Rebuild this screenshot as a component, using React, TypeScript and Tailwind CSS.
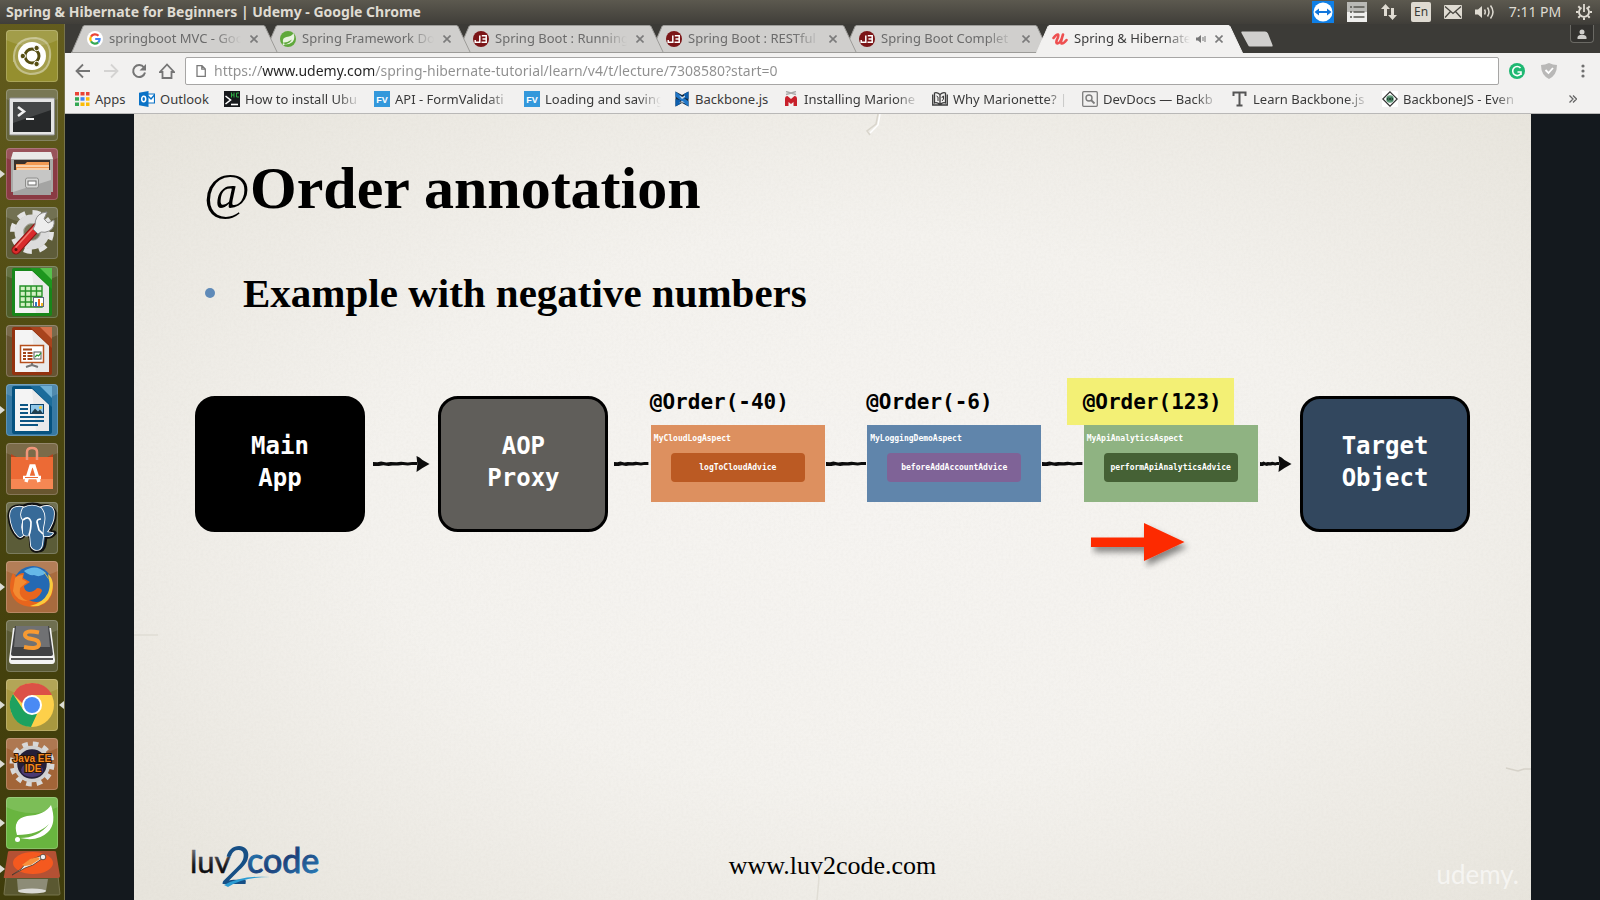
import React from 'react';
import type { ReactNode } from 'react';

/* ---------- Top panel ---------- */

function TopPanel() {
  return (
    <header className="flex h-6 shrink-0 items-center justify-between bg-linear-to-b from-[#5c594f] to-[#403e39] pl-1.5 pr-[7px] text-[#dfdbd2]">
      <h1 className="text-[14px] leading-6 font-bold whitespace-nowrap">
        Spring &amp; Hibernate for Beginners | Udemy - Google Chrome
      </h1>
      <div className="flex h-6 items-center gap-[13px]">
        <button aria-label="TeamViewer">
          <svg className="block h-[22px] w-[22px]" viewBox="0 0 22 22">
            <rect width="22" height="22" fill="#0f7fe6" />
            <circle cx="11" cy="11" r="9.5" fill="#fff" />
            <path d="M2.500 11l4.500-3.500v2.500h8V7.500l4.500 3.500-4.500 3.500V12H7v2.500z" fill="#1276dc" />
          </svg>
        </button>
        <button aria-label="Task list">
          <svg className="block h-5 w-5" viewBox="0 0 20 20">
            <rect width="20" height="10" fill="#b9b9b5" />
            <rect y="10" width="20" height="10" fill="#efefed" />
            <path d="M3 5h2M3 10h2M3 15h2M6.500 5h11M6.500 10h11M6.500 15h11" stroke="#55554f" strokeWidth="1.600" />
          </svg>
        </button>
        <button aria-label="Network">
          <svg className="block h-[18px] w-[18px]" viewBox="0 0 18 18" fill="#dfdbd2">
            <path d="M5.500 1L10 6H7v7H4V6H1z" />
            <path d="M12.500 17L8 12h3V5h3v7h3z" />
          </svg>
        </button>
        <button className="h-5 w-5 rounded-xs bg-[#dfdbd2] text-[12px] leading-5 text-[#3c3b37]">En</button>
        <button aria-label="Messages">
          <svg className="block h-3.5 w-[18px]" viewBox="0 0 18 14">
            <rect width="18" height="14" rx="1" fill="#dfdbd2" />
            <path d="M1 1.500l8 7 8-7M1 12.500l5.500-6M17 12.500l-5.500-6" fill="none" stroke="#45433d" strokeWidth="1.300" />
          </svg>
        </button>
        <button aria-label="Sound">
          <svg className="block h-4 w-5" viewBox="0 0 20 16" fill="none" stroke="#dfdbd2" strokeWidth="1.500">
            <path d="M0 5.500h3L7 2v12L3 10.500H0z" fill="#dfdbd2" stroke="none" />
            <path d="M9.500 5.500q1.500 2.500 0 5M12.500 3.500q3 4.500 0 9M15.500 1.500q5 6.500 0 13" />
          </svg>
        </button>
        <time className="w-[54px] text-center text-[14px] leading-6 whitespace-nowrap">7:11 PM</time>
        <button aria-label="System">
          <svg className="block h-[18px] w-[18px]" viewBox="0 0 18 18" fill="none" stroke="#dfdbd2">
            <path d="M6.500 4.600a5 5 0 1 0 5 0" strokeWidth="1.800" />
            <path d="M9 1v8" strokeWidth="1.800" />
            <path d="M1 9h2.500M14.500 9H17M3.300 3.300l1.800 1.800M14.700 3.300l-1.800 1.800M3.300 14.700l1.800-1.800M14.700 14.700l-1.800-1.800M9 14.500V17" strokeWidth="2" />
          </svg>
        </button>
      </div>
    </header>
  );
}

/* ---------- Launcher ---------- */

const DocShape = ({ dark, mid, light }: { dark: string; mid: string; light: string }) => (
  <>
    <path d="M6 4q0-2 2-2h18l20 20v26q0 2-2 2H8q-2 0-2-2z" fill={dark} />
    <path d="M9 5h17l17 16v26H9z" fill="#f4f4f4" />
    <path d="M26 5l17 16v26H30z" fill="#e2e2e2" opacity=".6" />
    <path d="M24 2h20q2 0 2 2v19z" fill={mid} />
    <path d="M34 2h12v12z" fill={light} />
  </>
);

const launcherItems: { name: string; tile: string; running?: boolean; active?: boolean; art: ReactNode }[] = [
  {
    name: 'Search your computer',
    tile: 'bg-[#958f2f]',
    art: (
      <>
        <circle cx="26" cy="26" r="19" fill="#fff" opacity=".14" />
        <path d="M8 32Q6 8 30 8q16 2 14 20M44 20q2 24-20 24-14-2-16-16" fill="none" stroke="#fff" strokeWidth="2" opacity=".35" />
        <circle cx="26" cy="26" r="14" fill="#fff" />
        <circle cx="26" cy="26" r="7" fill="none" stroke="#554d12" strokeWidth="3" />
        <g fill="#554d12" stroke="#fff" strokeWidth="1">
          <circle cx="16.800" cy="26" r="2.700" />
          <circle cx="30.600" cy="18" r="2.700" />
          <circle cx="30.600" cy="34" r="2.700" />
        </g>
      </>
    ),
  },
  {
    name: 'Terminal',
    tile: 'bg-[#66653b]',
    art: (
      <>
        <rect x="3.500" y="9" width="45" height="37" rx="1" fill="#e4e4e4" stroke="#8e8e8e" />
        <rect x="7" y="13" width="38" height="30" fill="#262829" />
        <path d="M7 13h38v8L7 34z" fill="#fff" opacity=".14" />
        <path d="M12 18l6 4.500-6 4.500" fill="none" stroke="#f1f1f1" strokeWidth="2.500" />
        <path d="M20 30h8" stroke="#f1f1f1" strokeWidth="2" />
      </>
    ),
  },
  {
    name: 'Files',
    tile: 'bg-[#8a3a43]',
    running: true,
    art: (
      <>
        <path d="M7 5h38l2 6v33H5V11z" fill="#a9a9a7" />
        <path d="M7 4h38l2 7H5z" fill="#e9e9e8" />
        <rect x="8" y="12" width="36" height="12" fill="#3a302b" />
        <path d="M10 16h9l2-2h22v10H10z" fill="#f39a52" />
        <path d="M10 18h33M11 21h32" stroke="#fde2c5" strokeWidth="1.500" />
        <path d="M7 22h38v25H7z" fill="#a4a4a3" />
        <path d="M7 22h38v10L7 44z" fill="#c6c6c5" />
        <rect x="19.500" y="30" width="13" height="10" rx="2" fill="#d7d7d6" stroke="#8e8e8c" />
        <rect x="22" y="33" width="8" height="4" fill="#fff" stroke="#6e6e6c" />
      </>
    ),
  },
  {
    name: 'System Settings',
    tile: 'bg-[#5e5c39]',
    art: (
      <>
        <circle cx="26" cy="25" r="19.500" fill="none" stroke="#e3e3e3" strokeWidth="5" strokeDasharray="8 7.300" />
        <circle cx="26" cy="25" r="13" fill="none" stroke="#dcdcdc" strokeWidth="9" />
        <circle cx="26" cy="25" r="8.500" fill="#77765a" stroke="#b5b5b0" />
        <path d="M10 43L31 20" stroke="#8e1414" strokeWidth="9" strokeLinecap="round" />
        <path d="M10 43L31 20" stroke="#d92b2b" strokeWidth="7" strokeLinecap="round" />
        <path d="M10 40L29 19" stroke="#f07b70" strokeWidth="1.500" strokeLinecap="round" />
        <path d="M29 18q0-9 7-12l5-1-3 7 4 4 6-3q1 8-5 11-4 2-8 1l-3 2-5-5z" fill="#ededed" stroke="#8c8c8c" />
        <circle cx="10" cy="42.500" r="1.500" fill="#5f1010" />
      </>
    ),
  },
  {
    name: 'LibreOffice Calc',
    tile: 'bg-[#4f5d2a]',
    art: (
      <>
        <DocShape dark="#18861a" mid="#1d961e" light="#57c24d" />
        <rect x="14" y="20" width="22" height="21" fill="#d3f1c4" />
        <path d="M14 20h22v21H14zM19.500 20v21M25 20v21M30.500 20v21M14 25h22M14 30.500h22M14 36h22" fill="none" stroke="#27912a" strokeWidth="1.400" />
        <rect x="27.500" y="31.500" width="10" height="9" fill="#fff" stroke="#5a6a7a" />
        <path d="M29 40v-4h2v4z" fill="#2d78c4" />
        <path d="M32 40v-7h2v7z" fill="#e8641b" />
        <path d="M35 40v-3h2v3z" fill="#f0b722" />
      </>
    ),
  },
  {
    name: 'LibreOffice Impress',
    tile: 'bg-[#665432]',
    art: (
      <>
        <DocShape dark="#93320f" mid="#a8431d" light="#d4714a" />
        <rect x="14.500" y="20.500" width="23" height="17" fill="#fff" stroke="#b6501d" strokeWidth="1.500" />
        <path d="M17 24.500h9M17 28h3M21.500 28h5M17 31h3M21.500 31h5M17 34h3M21.500 34h5" stroke="#a24519" strokeWidth="1.800" />
        <rect x="28" y="27" width="7" height="7" fill="#fff" stroke="#555" />
        <path d="M29 32l2-2 1.500 1L35 28" fill="none" stroke="#2c9e36" strokeWidth="1.200" />
        <path d="M26 38v2l-6 2M26 40l6 2" stroke="#777" strokeWidth="2" fill="none" />
      </>
    ),
  },
  {
    name: 'LibreOffice Writer',
    tile: 'bg-[#3779a3]',
    running: true,
    art: (
      <>
        <DocShape dark="#06527f" mid="#1b6c9b" light="#6fb0d4" />
        <path d="M14 21h8M14 25h8M14 29h8M14 33h24M14 37h24M14 41h18" stroke="#0d5684" strokeWidth="2" />
        <rect x="24.500" y="20.500" width="13" height="9" fill="#8fc7e9" stroke="#0d4670" />
        <path d="M25 29.500l4-5 3 3 2-2 3 4z" fill="#213f4e" />
        <circle cx="34.500" cy="23.500" r="1.500" fill="#f3c738" />
      </>
    ),
  },
  {
    name: 'Ubuntu Software',
    tile: 'bg-[#68562f]',
    art: (
      <>
        <path d="M5 11l5 3h32l5-3v8H5z" fill="#b8421d" />
        <path d="M5 14h42v32H5z" fill="#ec6a35" />
        <path d="M5 36h42v10H5z" fill="#f58753" />
        <path d="M21 17V9q0-4 5-4t5 4v8" fill="none" stroke="#f0967a" strokeWidth="2.500" />
        <path d="M20 39l5-16h3l5 16M17 34.500h18" fill="none" stroke="#fff" strokeWidth="3.500" />
        <path d="M19 34.500h13" stroke="#ec6a35" strokeWidth="1" />
      </>
    ),
  },
  {
    name: 'pgAdmin',
    tile: 'bg-[#5b5c38]',
    art: (
      <g fill="#376a98" stroke="#111" strokeWidth="5" strokeLinejoin="round" style={{ paintOrder: 'stroke' }}>
        <path d="M17 5Q4 3 4 14q1 13 8 20 3 3 6-2l5 0 2 3 1 10q1 4 6 3 5 0 6-6l1-8q6 1 9-3l-6-1q7-10 6-20Q44 3 35 5q-8-4-18 0z" />
        <g stroke="#fff" strokeWidth="1.700">
          <path d="M17 5Q4 3 4 14q1 13 8 20 3 3 6-2-5-5-1-14 2-9 0-13z" />
          <path d="M35 5q13-4 13 7 0 9-7 18l6 1q-2 4-9 3-4-6-1-14 2-9-2-15z" />
          <path d="M17 6q9-5 18 0 5 6 3 15-2 8-1 14l-1 8q-1 5-5 5t-6-4l-1-11q-6 2-7-2V18q-4-5 0-12z" />
          <path d="M17 18q6-5 8 2 0 8-2 13M35 17q-4 0-4 3l2 8 4 4" fill="none" />
        </g>
      </g>
    ),
  },
  {
    name: 'Firefox',
    tile: 'bg-[#a86b3e]',
    running: true,
    art: (
      <>
        <circle cx="27" cy="25" r="20" fill="#2469b3" />
        <path d="M18 10q12-8 22 2-6 5-12 2-5 1-10-4z" fill="#65b8e8" />
        <path d="M7 12l3 4q3-4 8-4l-1 5 7 4-6 4q0 5 5 6 5 0 8-4 5 0 5 3-4 9-13 9 9 5 17-2 8-8 3-23 5 5 4 15-3 16-20 17Q6 45 4 27q0-9 3-15z" fill="#e8651d" />
        <path d="M37 10q10 9 5 22-5 10-18 13 15 2 21-11 5-14-3-21l1 6z" fill="#f8cb3d" />
        <path d="M9 17q3-3 8-3l-1 4 5 3-7 6q-2 10 8 13-12 0-15-10z" fill="#f38b31" />
      </>
    ),
  },
  {
    name: 'Sublime Text',
    tile: 'bg-[#5a5a36]',
    art: (
      <>
        <path d="M7 8h38l4 32q0 4-3 4H6q-3 0-3-4z" fill="#f3f3f3" />
        <path d="M5 39h42" stroke="#222" strokeWidth="1.500" />
        <path d="M9 6h34l4 28q0 2-2 2H7q-2 0-2-2z" fill="#414244" />
        <path d="M10 6h32l2 21H8z" fill="#707173" />
        <path d="M33 12.500q-14-3-14 2.500 0 3 7 4t7 5q0 6-15 3" fill="none" stroke="#f79a32" strokeWidth="4" />
      </>
    ),
  },
  {
    name: 'Google Chrome',
    tile: 'bg-[#a8983f]',
    running: true,
    active: true,
    art: (
      <>
        <circle cx="26" cy="26" r="22" fill="#fdd04a" />
        <path d="M26 4q14 0 20 12H26L16 24 7 15Q13 4 26 4z" fill="#dc5146" />
        <path d="M7 15l11 17 13 3-6 13Q8 47 4 29 3 21 7 15z" fill="#1da15f" />
        <circle cx="26" cy="26" r="10" fill="#fff" />
        <circle cx="26" cy="26" r="8" fill="#4a8af4" />
      </>
    ),
  },
  {
    name: 'Eclipse',
    tile: 'bg-[#a26538]',
    running: true,
    art: (
      <>
        <circle cx="26" cy="26" r="20" fill="none" stroke="#d8d8d8" strokeWidth="5" strokeDasharray="5.500 5" />
        <circle cx="26" cy="26" r="16.500" fill="#241f38" stroke="#d0d0d0" strokeWidth="3.500" />
        <ellipse cx="26" cy="32" rx="11" ry="7" fill="#544182" opacity=".8" />
        <g className="font-['Liberation_Sans'] text-[10px] font-bold" fill="#f58a20" stroke="#2b1505" strokeWidth="2" textAnchor="middle" style={{ paintOrder: 'stroke' }}>
          <text x="26" y="24">Java EE</text>
          <text x="27" y="34">IDE</text>
        </g>
      </>
    ),
  },
  {
    name: 'Spring Tool Suite',
    tile: 'bg-[#69b53f]',
    running: true,
    art: (
      <>
        <path d="M45 8q6 18-3 27-10 10-28 6 18 0 29-14-11 11-32 11-5-16 10-19 18-1 24-11z" fill="#fff" />
        <circle cx="11.500" cy="42.500" r="2.500" fill="#fff" />
      </>
    ),
  },
];

const RunningMark = () => (
  <svg className="absolute top-1/2 -left-1.5 -mt-1 h-2 w-[5px]" viewBox="0 0 5 8">
    <path d="M0 0l5 4-5 4z" fill="#dcdcd4" />
  </svg>
);

function Launcher() {
  return (
    <nav aria-label="Launcher" className="flex w-[65px] shrink-0 flex-col overflow-hidden border-r border-[#77734c] bg-linear-to-b from-[#635c1d] via-[#49450f] to-[#3f3c0b] px-1.5 pt-1.5">
      <div className="flex flex-col gap-[7px]">
        {launcherItems.map((item) => (
          <div key={item.name} className="relative h-[52px] w-[52px]">
            {item.running && <RunningMark />}
            <button aria-label={item.name} className={`block h-full w-full overflow-hidden rounded-sm shadow-[inset_0_0_0_1px_rgba(255,255,255,0.2)] ${item.tile}`}>
              <svg className="block h-full w-full" viewBox="0 0 52 52">
                <path d="M0 0h52v10Q26 22 0 10z" fill="#fff" opacity=".13" />
                {item.art}
              </svg>
            </button>
            {item.active && (
              <svg className="absolute top-1/2 -right-1.5 -mt-1 h-2 w-[5px]" viewBox="0 0 5 8">
                <path d="M5 0L0 4l5 4z" fill="#dcdcd4" />
              </svg>
            )}
          </div>
        ))}
      </div>
      <div className="relative -mx-1 mt-px">
        <svg className="absolute top-[15px] -left-0.5 h-2 w-[5px]" viewBox="0 0 5 8">
          <path d="M0 0l5 4-5 4z" fill="#dcdcd4" />
        </svg>
        <button aria-label="Postman and Trash" className="block">
          <svg className="block h-[46px] w-[60px]" viewBox="0 0 60 46">
            <path d="M4 26l52 0 2 18q0 1-2 1H3q-1 0-1-1z" fill="#5a5831" stroke="#77744d" />
            <path d="M15 29h31l-2 12H16z" fill="#8d8c77" />
            <ellipse cx="30" cy="41" rx="14" ry="2.500" fill="#dadad6" />
            <path d="M8 1h44q2 0 2 1l4 24q0 2-2 2H3q-2 0-1-2L6 2q0-1 2-1z" fill="#b45134" />
            <ellipse cx="31" cy="13" rx="20" ry="11" fill="#f4591f" />
            <path d="M10 25l9-6 7-8 12-5 3 2-10 7-8 3z" fill="#efefef" stroke="#4a3528" strokeWidth=".8" />
            <path d="M20 15l8-6 8-2 2 2-9 6-6 1z" fill="#f8913c" />
            <circle cx="41" cy="7" r="2.800" fill="#efefef" stroke="#4a3528" strokeWidth=".8" />
          </svg>
        </button>
      </div>
    </nav>
  );
}

/* ---------- Browser tabs ---------- */

const GoogleIcon = () => (
  <svg className="block h-4 w-4" viewBox="0 0 16 16">
    <circle cx="8" cy="8" r="8" fill="#fff" />
    <g fill="none" strokeWidth="2.200">
      <path d="M11.500 4.800A4.700 4.700 0 0 0 4 5.600" stroke="#ea4335" />
      <path d="M4 5.600a4.700 4.700 0 0 0 0 4.800" stroke="#fbbc05" />
      <path d="M4 10.400a4.700 4.700 0 0 0 7.200 1" stroke="#34a853" />
      <path d="M11.200 11.400Q12.700 10 12.600 8H8.200" stroke="#4285f4" />
    </g>
  </svg>
);

const SpringIcon = () => (
  <svg className="block h-4 w-4" viewBox="0 0 16 16">
    <circle cx="8" cy="8" r="8" fill="#5fa83b" />
    <path d="M13.500 2q2 6-1 9-3.500 3-9 2.500 6-.5 8.500-5-4 3-9 3.300-1-5 3.500-5.800Q12 5.500 13.500 2z" fill="#e8f3e0" />
    <circle cx="3.600" cy="13.200" r="1" fill="#e8f3e0" />
  </svg>
);

const JbIcon = () => (
  <svg className="block h-4 w-4" viewBox="0 0 16 16">
    <circle cx="8" cy="8" r="8" fill="#7b1517" />
    <path d="M6.800 4.500V11.200H2.200V9M8.800 4.800h4.400v6.400H8.500M9.500 8H13" fill="none" stroke="#fff" strokeWidth="1.500" />
  </svg>
);

const UdemyIcon = () => (
  <svg className="block h-4 w-4" viewBox="0 0 16 16">
    <path d="M1.500 7Q4.500 3 6 3.500q1 1-1 5-1.500 4 .5 4 3 0 5.500-9-2.500 8-1.500 9 2 .5 5-3.500" fill="none" stroke="#ee4f50" strokeWidth="2.600" strokeLinecap="round" strokeLinejoin="round" />
  </svg>
);

const tabs: { title: string; icon: ReactNode; layer: string; active?: boolean }[] = [
  { title: 'springboot MVC - Goo', icon: <GoogleIcon />, layer: 'z-5' },
  { title: 'Spring Framework Do', icon: <SpringIcon />, layer: 'z-4' },
  { title: 'Spring Boot : Running', icon: <JbIcon />, layer: 'z-3' },
  { title: 'Spring Boot : RESTful', icon: <JbIcon />, layer: 'z-2' },
  { title: 'Spring Boot Complet', icon: <JbIcon />, layer: 'z-1' },
  { title: 'Spring & Hibernate', icon: <UdemyIcon />, layer: 'z-10', active: true },
];

function TabStrip() {
  return (
    <div role="tablist" className="flex h-[29px] shrink-0 items-start justify-between bg-[#3c3b37] pr-1.5 pl-1.5">
      <div className="flex h-full items-end">
        {tabs.map((tab) => (
          <div key={tab.title} className={`relative isolate flex h-7 w-[193px] shrink-0 items-center pl-4 ${tab.layer}`}>
            <svg className="absolute top-0 left-0 -z-1 h-7 w-[207px]" viewBox="0 0 207 28">
              <path d="M.5 28L12 1.500Q12.500.5 14 .5h178q1.500 0 2 1L206.500 28" fill={tab.active ? '#f2f1f0' : '#d0cfcd'} stroke={tab.active ? '#f2f1f0' : '#9c9b98'} />
              {!tab.active && <path d="M0 27.500h207" stroke="#9c9b98" />}
            </svg>
            {tab.icon}
            <button
              role="tab"
              aria-selected={!!tab.active}
              className={`ml-1.5 pb-0.5 text-left text-[13px] leading-5 whitespace-nowrap [mask-image:linear-gradient(to_right,#000_80%,transparent)] ${tab.active ? 'w-[116px] text-[#3c3c3c]' : 'w-[132px] text-[#6b6b6b]'}`}
            >
              {tab.title}
            </button>
            {tab.active && (
              <svg className="ml-1.5 block h-2.5 w-2.5" viewBox="0 0 10 10">
                <path d="M0 3.500h2L5 1v8L2 6.500H0z" fill="#777" />
                <path d="M7 3v4M9 2v6" stroke="#777" />
              </svg>
            )}
            <button aria-label="Close tab" className="ml-[9px]">
              <svg className="block h-2 w-2" viewBox="0 0 8 8">
                <path d="M.5.5l7 7M7.500.5l-7 7" stroke="#7b7b7b" strokeWidth="1.600" />
              </svg>
            </button>
          </div>
        ))}
        <button aria-label="New tab" className="ml-3 self-center">
          <svg className="block h-4 w-8" viewBox="0 0 32 16">
            <path d="M1 .5h23q2 0 3 2L31.500 14q.5 1.500-1 1.500H9q-1.500 0-2-1.500L.5 2Q0 .5 1 .5z" fill="#d0cfcd" />
          </svg>
        </button>
      </div>
      <button aria-label="Profile" className="mt-px flex h-[18px] w-6 items-center justify-center rounded-b-sm border border-t-0 border-[#6a6964] bg-[#33322f]">
        <svg className="block h-3 w-2.5" viewBox="0 0 10 12">
          <circle cx="5" cy="4" r="2.500" fill="#cfcecb" />
          <path d="M.5 11V9Q1 7.500 3 7h4q2 .5 2.500 2v2z" fill="#cfcecb" />
        </svg>
      </button>
    </div>
  );
}

/* ---------- Toolbar ---------- */

function Toolbar() {
  return (
    <div className="flex h-9 shrink-0 items-center pr-[15px] pb-px pl-[10px]">
      <div className="flex gap-3">
        <button aria-label="Back">
          <svg className="block h-4 w-4" viewBox="0 0 16 16" fill="none" stroke="#757575" strokeWidth="1.800">
            <path d="M15 8H2M8 1.500L1.500 8 8 14.500" />
          </svg>
        </button>
        <button aria-label="Forward">
          <svg className="block h-4 w-4" viewBox="0 0 16 16" fill="none" stroke="#d4d3d2" strokeWidth="1.800">
            <path d="M1 8h13M8 1.500L14.500 8 8 14.500" />
          </svg>
        </button>
        <button aria-label="Reload">
          <svg className="block h-4 w-4" viewBox="0 0 16 16">
            <path d="M13 4.500A6 6 0 1 0 14 9.500" fill="none" stroke="#757575" strokeWidth="2" />
            <path d="M15 1v6.500H8.500z" fill="#757575" />
          </svg>
        </button>
        <button aria-label="Home">
          <svg className="block h-4 w-4" viewBox="0 0 16 16">
            <path d="M8 1.500L1 9h2.500v6h9V9H15z" fill="none" stroke="#757575" strokeWidth="1.800" />
          </svg>
        </button>
      </div>
      <label className="ml-[10px] flex h-7 min-w-0 flex-1 items-center rounded-xs border border-[#a7a6a5] bg-white pl-2.5">
        <svg className="block h-3 w-2.5 shrink-0" viewBox="0 0 10 12">
          <path d="M1 .7h5L9.300 4v7.300H1zM5.800.7v3.500h3.500" fill="none" stroke="#7a7a7a" strokeWidth="1.300" />
        </svg>
        <input
          aria-label="Address"
          className="ml-2 h-6 min-w-0 flex-1 bg-[linear-gradient(to_right,#8f8f8f_47px,#222_47px,#222_160px,#8f8f8f_160px)] bg-clip-text text-[14px] text-transparent outline-none"
          defaultValue="https://www.udemy.com/spring-hibernate-tutorial/learn/v4/t/lecture/7308580?start=0"
        />
      </label>
      <div className="ml-2.5 flex items-center">
        <button aria-label="Grammarly">
          <svg className="block h-4 w-4" viewBox="0 0 16 16">
            <circle cx="8" cy="8" r="8" fill="#1fb872" />
            <path d="M11.500 5A4.500 4.500 0 1 0 12 10.500M8.500 9H12v3" fill="none" stroke="#fff" strokeWidth="1.600" />
          </svg>
        </button>
        <button aria-label="AdGuard" className="ml-4">
          <svg className="block h-4 w-4" viewBox="0 0 16 16">
            <path d="M8 0q4 2 8 2 0 10-8 14Q0 12 0 2q4 0 8-2z" fill="#b9b8b7" />
            <path d="M4.500 7l3 3L12 5" fill="none" stroke="#fff" strokeWidth="1.800" />
          </svg>
        </button>
        <button aria-label="Menu" className="ml-6">
          <svg className="block h-3.5 w-1" viewBox="0 0 4 14" fill="#6f6f6f">
            <circle cx="2" cy="2" r="1.600" />
            <circle cx="2" cy="7" r="1.600" />
            <circle cx="2" cy="12" r="1.600" />
          </svg>
        </button>
      </div>
    </div>
  );
}

/* ---------- Bookmarks ---------- */

const FvIcon = () => (
  <svg className="block h-4 w-4" viewBox="0 0 16 16">
    <rect width="16" height="16" fill="#3498db" />
    <text x="8" y="11.500" textAnchor="middle" fill="#fff" className="font-['Liberation_Sans'] text-[9px] font-bold">FV</text>
  </svg>
);

const bookmarks: { label: string; width: string; icon: ReactNode }[] = [
  {
    label: 'Apps',
    width: 'w-[31px]',
    icon: (
      <svg className="block h-4 w-4" viewBox="0 0 16 16">
        <path d="M1 1h4v3.500H1zM6.500 1h4v3.500h-4zM12 1h3.500v3.500H12z" fill="#ea4335" />
        <path d="M1 6.200h4v3.500H1z" fill="#34a853" />
        <path d="M6.500 6.200h4v3.500h-4z" fill="#4285f4" />
        <path d="M12 6.200h3.500v3.500H12z" fill="#fbbc05" />
        <path d="M1 11.500h4V15H1z" fill="#34a853" />
        <path d="M6.500 11.500h4V15h-4zM12 11.500h3.500V15H12z" fill="#fbbc05" />
      </svg>
    ),
  },
  {
    label: 'Outlook',
    width: 'w-[51px]',
    icon: (
      <svg className="block h-4 w-4" viewBox="0 0 16 16">
        <path d="M8 3h7.500v9H8z" fill="#fff" stroke="#0a72c6" strokeWidth="1.200" />
        <path d="M9 5l3 3 3.500-4" fill="none" stroke="#0a72c6" strokeWidth="1.500" />
        <path d="M0 1.800L9.500 0v16L0 14.200z" fill="#0a72c6" />
        <ellipse cx="4.700" cy="8" rx="2" ry="2.700" fill="none" stroke="#fff" strokeWidth="1.500" />
      </svg>
    ),
  },
  {
    label: 'How to install Ubu',
    width: 'w-[116px]',
    icon: (
      <svg className="block h-4 w-4" viewBox="0 0 16 16">
        <rect width="16" height="16" fill="#17191c" />
        <path d="M1.500 5l5 4-5 4" fill="none" stroke="#fff" strokeWidth="1.600" />
        <path d="M7 13.500h7" stroke="#fff" strokeWidth="1.600" />
        <path d="M7.500 1.500v5M10 1.500v5M7.500 4H10M15 2h-2.500v4H15" fill="none" stroke="#2fae44" />
      </svg>
    ),
  },
  { label: 'API - FormValidati', width: 'w-[116px]', icon: <FvIcon /> },
  { label: 'Loading and saving', width: 'w-[116px]', icon: <FvIcon /> },
  {
    label: 'Backbone.js',
    width: 'w-[75px]',
    icon: (
      <svg className="block h-4 w-4" viewBox="0 0 16 16">
        <path d="M1.500 .5L8 4l6.500-3.500v15L8 12l-6.500 3.500z" fill="#11293f" />
        <path d="M1.500 .5v5l13 10v-5z" fill="#1f76c8" />
        <path d="M14.500 .5L10 3v4l4.500 1zM1.500 15.500L6 13V9L1.500 8z" fill="#0d5fae" />
        <path d="M5 4.500l3 1.500 3-1.500v1.500L8 8zM5 11.500L8 10l3 1.500" fill="#f2f1f0" opacity=".85" />
      </svg>
    ),
  },
  {
    label: 'Installing Marione',
    width: 'w-[115px]',
    icon: (
      <svg className="block h-4 w-4" viewBox="0 0 16 16">
        <path d="M3 .5l10 3M13 .5l-10 3" stroke="#aaa" strokeWidth="1.400" />
        <path d="M2 15V8q0-3 2.500-3L8 8l3.500-3Q14 5 14 8v7h-3.500v-4L8 13l-2.500-2v4z" fill="#c8202b" />
      </svg>
    ),
  },
  {
    label: 'Why Marionette? |',
    width: 'w-[116px]',
    icon: (
      <svg className="block h-4 w-4" viewBox="0 0 16 16" fill="none" stroke="#3b3b3b" strokeWidth="1.300">
        <path d="M8 3.500Q5 1 2.500 2v10Q5 11 8 13.500 11 11 13.500 12V2Q11 1 8 3.500zM8 3.500v10M.7 3.500v10.500h14.600V3.500" />
        <path d="M4.500 5l1.500 1v4M10 7q0-2 1.500-2v3L10 10" strokeWidth="1" />
      </svg>
    ),
  },
  {
    label: 'DevDocs — Backb',
    width: 'w-[116px]',
    icon: (
      <svg className="block h-4 w-4" viewBox="0 0 16 16" fill="none" stroke="#7d7d7d">
        <rect x=".7" y=".7" width="14.600" height="14.600" rx="1" strokeWidth="1.300" />
        <circle cx="7" cy="7" r="3" strokeWidth="1.400" />
        <path d="M9 9l3.500 3.500" strokeWidth="1.800" />
      </svg>
    ),
  },
  {
    label: 'Learn Backbone.js',
    width: 'w-[116px]',
    icon: (
      <svg className="block h-4 w-4" viewBox="0 0 16 16">
        <path d="M1.500 5V1.500h12V5M7.500 1.500v13M4.500 14.500h6" fill="none" stroke="#555" strokeWidth="2" />
      </svg>
    ),
  },
  {
    label: 'BackboneJS - Even',
    width: 'w-[116px]',
    icon: (
      <svg className="block h-4 w-4" viewBox="0 0 16 16">
        <rect width="16" height="16" fill="#fff" />
        <path d="M8 .8L15.200 8 8 15.200.8 8z" fill="#fff" stroke="#333" strokeWidth="1.200" />
        <circle cx="8" cy="8" r="3.800" fill="#5f9a79" />
        <path d="M5.500 7h2v2h-2zM8.500 7h2v2h-2z" fill="none" stroke="#1d4030" strokeWidth=".9" />
      </svg>
    ),
  },
];

function Bookmarks() {
  return (
    <div className="flex h-[25px] shrink-0 items-start justify-between border-b border-[#b9b8b7] pr-[23px] pl-[9px]">
      <ul className="flex gap-[13px]">
        {bookmarks.map((b) => (
          <li key={b.label}>
            <a href="#" className="flex items-center gap-[5px] text-[#3a3a3a]">
              {b.icon}
              <span className={`text-[13px] leading-5 whitespace-nowrap ${b.width} ${b.label.length > 11 ? '[mask-image:linear-gradient(to_right,#000_80%,transparent)]' : ''}`}>
                {b.label}
              </span>
            </a>
          </li>
        ))}
      </ul>
      <button aria-label="More bookmarks">
        <svg className="mt-1.5 block h-2 w-2" viewBox="0 0 8 8">
          <path d="M.5.5L4 4 .5 7.500M4 .5L7.500 4 4 7.500" fill="none" stroke="#666" strokeWidth="1.300" />
        </svg>
      </button>
    </div>
  );
}

/* ---------- Slide ---------- */

const Stroke = () => (
  <svg className="block h-[5px] min-w-0 flex-1" viewBox="0 0 60 5" preserveAspectRatio="none">
    <path d="M0 1l6 .2 5-.6 7 .8 6-.5 8 .4 6-.6 9 .7 6-.5 7 .2v3l-8-.1-5 .6-7-.7-6 .7-8-.2-5 .5-7-.7-6 .8-8-.1z" fill="#0c0c0c" />
  </svg>
);

function Connector({ basis, pad, head }: { basis: string; pad: string; head?: boolean }) {
  return (
    <div className={`flex min-w-0 grow items-center ${basis} ${pad}`}>
      <Stroke />
      {head && (
        <svg className="-ml-px block h-[18px] w-3.5 shrink-0" viewBox="0 0 14 18">
          <path d="M.5 1q3 1 6 4l7 4-7 4-6 4 .8-8z" fill="#0c0c0c" />
        </svg>
      )}
    </div>
  );
}

function Node({ lines, fill }: { lines: [string, string]; fill: string }) {
  return (
    <div className={`flex h-[136px] w-[170px] shrink-0 flex-col items-center justify-center rounded-[20px] border-3 border-black pb-1 text-[24px] leading-8 font-bold text-white ${fill}`}>
      <span>{lines[0]}</span>
      <span>{lines[1]}</span>
    </div>
  );
}

function Aspect(props: { order: string; name: string; advice: string; card: string; pill: string; marked?: boolean; pointer?: boolean }) {
  return (
    <div className="flex w-[174px] shrink-0 flex-col">
      <div className="flex h-[60px] items-end">
        <span className={`-ml-[17px] flex h-[47px] items-center pr-3 pl-4 text-[21px] leading-6 font-bold whitespace-nowrap text-black ${props.marked ? 'bg-[#f3f075]' : ''}`}>
          {props.order}
        </span>
      </div>
      <div className={`flex h-[77px] flex-col px-[3px] pt-2 text-[8px] leading-3 font-bold text-white ${props.card}`}>
        <span>{props.name}</span>
        <span className={`mx-[17px] mt-2 flex h-[29px] items-center justify-center rounded-sm whitespace-nowrap ${props.pill}`}>{props.advice}</span>
      </div>
      <div className="h-[60px] pt-5 pl-1.5">
        {props.pointer && (
          <svg className="block h-12 w-28" viewBox="0 0 112 48">
            <defs>
              <filter id="soft" x="-20%" y="-20%" width="150%" height="160%">
                <feDropShadow dx="3" dy="5" stdDeviation="3" floodColor="#000" floodOpacity=".45" />
              </filter>
            </defs>
            <path d="M1 15.500h53V1l40.500 19L54 39V25H1z" fill="#fd2a04" filter="url(#soft)" />
          </svg>
        )}
      </div>
    </div>
  );
}

function Luv2CodeLogo() {
  return (
    <svg className="block h-12 w-[134px]" viewBox="0 0 134 48" role="img" aria-label="luv2code">
      <defs>
        <linearGradient id="ink" x1="0" y1="0" x2="0" y2="1">
          <stop offset="0" stopColor="#9a9aa0" />
          <stop offset=".6" stopColor="#1a1a1e" />
          <stop offset="1" stopColor="#000" />
        </linearGradient>
        <linearGradient id="sea" x1="0" y1="0" x2="1" y2="1">
          <stop offset="0" stopColor="#2a9ed6" />
          <stop offset=".5" stopColor="#1d3f78" />
          <stop offset="1" stopColor="#2b86c2" />
        </linearGradient>
      </defs>
      <g className="font-['Lato']">
        <text x="0" y="31" className="text-[31px]" fill="url(#ink)" stroke="url(#ink)" strokeWidth=".5">luv</text>
        <text x="31" y="42" className="text-[52px] italic" fill="#164f85">2</text>
        <text x="57" y="31" className="text-[34px]" fill="url(#sea)" stroke="url(#sea)" strokeWidth="1">code</text>
      </g>
      <path d="M34 43q18-10 46-8-26 0-42 10z" fill="#2b9bd2" />
    </svg>
  );
}

function Paper() {
  return (
    <svg className="absolute inset-0 h-full w-full" viewBox="0 0 1397 786" preserveAspectRatio="none" aria-hidden="true">
      <defs>
        <radialGradient id="page" cx=".52" cy=".5" r=".7">
          <stop offset="0" stopColor="#f6f4f1" />
          <stop offset=".5" stopColor="#f4f2ee" />
          <stop offset="1" stopColor="#e8e5dd" />
        </radialGradient>
        <filter id="grain" x="0" y="0" width="100%" height="100%">
          <feTurbulence type="fractalNoise" baseFrequency=".4" numOctaves="3" seed="4" />
          <feColorMatrix values="0 0 0 0 .45  0 0 0 0 .43  0 0 0 0 .38  .5 0 0 0 -.17" />
        </filter>
      </defs>
      <rect width="1397" height="786" fill="url(#page)" />
      <rect width="1397" height="786" filter="url(#grain)" opacity=".22" />
      <g fill="none" strokeWidth="1.500">
        <path d="M744 0l-2 10-9 7 3 4" stroke="#d9d5cc" />
        <path d="M746 0l-2 11-8 8" stroke="#fff" />
        <path d="M0 521h24" stroke="#dfdcd4" />
        <path d="M1372 654l12 3 6-2h8" stroke="#d6d2c9" />
        <path d="M683 786l2-22-3-12" stroke="#e0ddd5" />
      </g>
    </svg>
  );
}

function Slide() {
  return (
    <main className="flex min-h-0 flex-1 bg-[#14191e] px-[69px]">
      <article className="relative isolate flex min-w-0 flex-1 flex-col overflow-hidden text-black">
        <div className="absolute inset-0 -z-1">
          <Paper />
        </div>
        <h2 className="pt-10 pl-[70px] font-['Liberation_Serif',serif] text-[60px] leading-[68px] font-bold whitespace-nowrap">
          <span className="text-[50px] font-normal">@</span>Order annotation
        </h2>
        <ul className="mt-11 pl-[71px]">
          <li className="flex items-center font-['Liberation_Serif',serif] text-[41px] leading-[48px] font-bold whitespace-nowrap">
            <span className="mr-7 h-2.5 w-2.5 rounded-full bg-[#5f8ab8]" />
            Example with negative numbers
          </li>
        </ul>
        <section aria-label="Advice order" className="mt-12 flex items-center px-[61px] font-['DejaVu_Sans_Mono',monospace]">
          <Node lines={['Main', 'App']} fill="bg-black" />
          <Connector basis="basis-[73px]" pad="px-2" head />
          <Node lines={['AOP', 'Proxy']} fill="bg-[#605e5a]" />
          <Connector basis="basis-[42px]" pad="pl-1.5 pr-0.5" />
          <Aspect order="@Order(-40)" name="MyCloudLogAspect" advice="logToCloudAdvice" card="bg-[#dd905f]" pill="bg-[#bb5a23]" />
          <Connector basis="basis-[42px]" pad="px-px" />
          <Aspect order="@Order(-6)" name="MyLoggingDemoAspect" advice="beforeAddAccountAdvice" card="bg-[#6085ab]" pill="bg-[#7f6397]" />
          <Connector basis="basis-[42px]" pad="px-px" />
          <Aspect order="@Order(123)" name="MyApiAnalyticsAspect" advice="performApiAnalyticsAdvice" card="bg-[#8fb382]" pill="bg-[#456135]" marked pointer />
          <Connector basis="basis-[42px]" pad="pl-0.5 pr-2" head />
          <Node lines={['Target', 'Object']} fill="bg-[#32475e]" />
        </section>
        <footer className="mt-auto grid grid-cols-3 items-end px-14 pb-2.5">
          <Luv2CodeLogo />
          <a href="#" className="mb-2 text-center font-['Liberation_Serif',serif] text-[26px] leading-8">www.luv2code.com</a>
          <span className="-mr-11 text-right font-['Lato'] text-[26px] leading-8 text-white/60">udemy.</span>
        </footer>
      </article>
    </main>
  );
}

export default function App() {
  return (
    <div className="flex h-screen flex-col overflow-hidden bg-[#14191e] font-['Noto_Sans',sans-serif]">
      <TopPanel />
      <div className="flex min-h-0 flex-1">
        <Launcher />
        <div className="flex min-w-0 flex-1 flex-col">
          <TabStrip />
          <div className="bg-[#f2f1f0]">
            <Toolbar />
            <Bookmarks />
          </div>
          <Slide />
        </div>
      </div>
    </div>
  );
}
